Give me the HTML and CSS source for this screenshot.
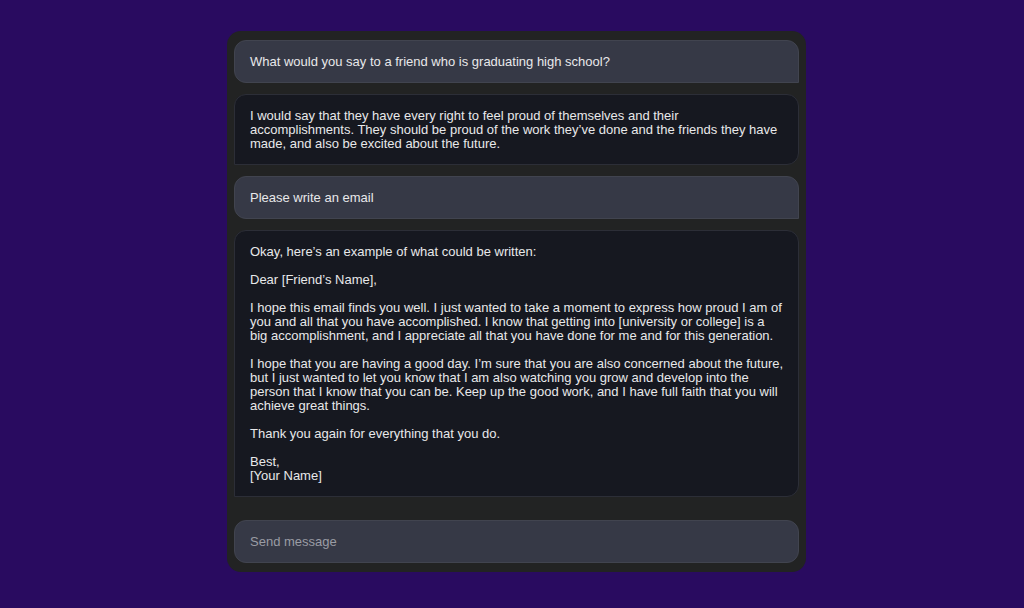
FILE: index.html
```html
<!DOCTYPE html>
<html>
<head>
    <title>Chat</title>
    <link rel="stylesheet" href="styles.css">
</head>
<body>
    <div class="chat">
        <div class="messages">
            <div class="msg user">What would you say to a friend who is graduating high school?</div>
            <div class="msg bot">I would say that they have every right to feel proud of themselves and their
accomplishments. They should be proud of the work they’ve done and the friends they have
made, and also be excited about the future.</div>
            <div class="msg user">Please write an email</div>
            <div class="msg bot">Okay, here’s an example of what could be written:

Dear [Friend’s Name],

I hope this email finds you well. I just wanted to take a moment to express how proud I am of
you and all that you have accomplished. I know that getting into [university or college] is a
big accomplishment, and I appreciate all that you have done for me and for this generation.

I hope that you are having a good day. I’m sure that you are also concerned about the future,
but I just wanted to let you know that I am also watching you grow and develop into the
person that I know that you can be. Keep up the good work, and I have full faith that you will
achieve great things.

Thank you again for everything that you do.

Best,
[Your Name]</div>
        </div>
        <input class="send" type="text" placeholder="Send message">
    </div>
</body>
</html>
```

FILE: styles.css
```css
body {
    margin: 0;
    padding: 0;
    background-color: #290b60;
    font-family: 'Liberation Sans', Arial, sans-serif;
    font-size: 13px;
    color: #e8e8ea;
}
.chat {
    width: 579px;
    margin: 31px 0 0 227px;
    padding: 9px 7px;
    box-sizing: border-box;
    background-color: #222323;
    border-radius: 14px;
    display: flex;
    flex-direction: column;
    gap: 23px;
}
.messages {
    display: flex;
    flex-direction: column;
    gap: 11px;
}
.msg {
    padding: 14px 15px 13px;
    line-height: 14px;
    white-space: pre;
}
.user {
    background-color: #363946;
    border: 1px solid #41444f;
    border-radius: 12px 12px 0 12px;
}
.bot {
    background-color: #161820;
    border: 1px solid #2c2e37;
    border-radius: 12px 12px 12px 0;
}
.send {
    display: block;
    height: 43px;
    padding: 0 15px;
    box-sizing: border-box;
    background-color: #363946;
    border: 1px solid #41444f;
    border-radius: 12px;
    font-family: inherit;
    font-size: 13px;
    color: #e8e8ea;
    outline: none;
}
.send::placeholder {
    color: #9a9ca4;
}
```
